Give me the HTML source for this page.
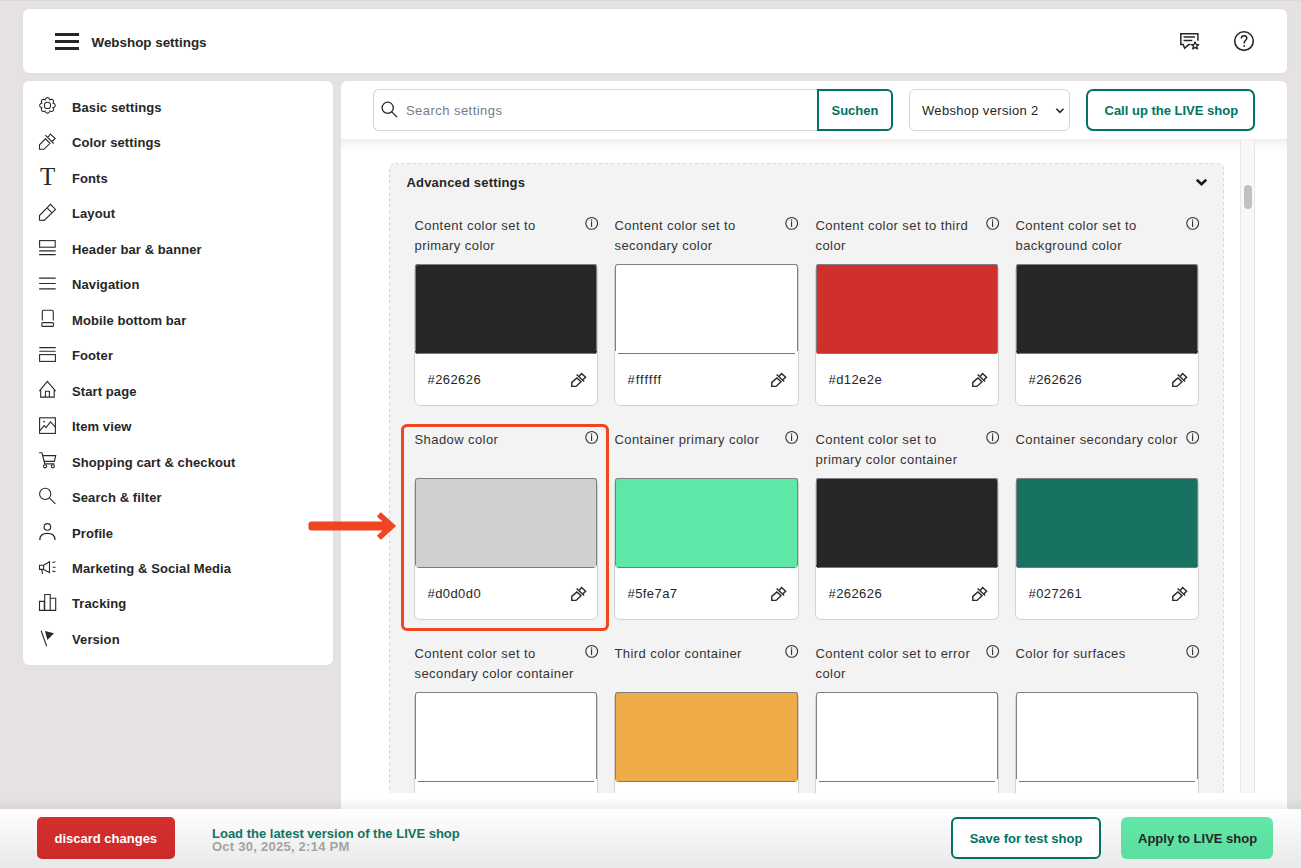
<!DOCTYPE html>
<html><head><meta charset="utf-8"><style>
*{box-sizing:border-box;margin:0;padding:0}
html,body{width:1301px;height:868px;overflow:hidden}
body{background:#e6e2e1;font-family:"Liberation Sans",sans-serif;color:#262626;position:relative}
.abs{position:absolute}
.topline{position:absolute;left:0;top:0;width:1301px;height:1px;background:#d9dadd}
.hdr{position:absolute;left:23px;top:9px;width:1264px;height:64px;background:#fff;border-radius:6px;box-shadow:0 0 4px rgba(0,0,0,0.035)}
.side{position:absolute;left:23px;top:81px;width:310px;height:584px;background:#fff;border-radius:6px;box-shadow:0 0 3px rgba(0,0,0,0.03)}
.main{position:absolute;left:341px;top:81px;width:946px;height:740px;background:#fff;border-radius:6px 6px 0 0}
.t13b{font-size:13px;font-weight:bold;line-height:16px;white-space:nowrap}
.nav{position:absolute;left:72px;font-size:13px;font-weight:bold;line-height:16px;letter-spacing:0.1px;white-space:nowrap;color:#262626}
.search{position:absolute;left:373px;top:89px;width:445px;height:42px;border:1px solid #cdd5dd;border-right:none;border-radius:6px 0 0 6px;background:#fff}
.ph{position:absolute;left:406px;top:102.9px;font-size:13px;line-height:16px;color:#737c87;letter-spacing:0.45px;white-space:nowrap}
.suchen{position:absolute;left:817px;top:89px;width:76px;height:42px;border:2px solid #027261;border-radius:0 6px 6px 0;background:#fff;color:#027261}
.select{position:absolute;left:909px;top:89px;width:161px;height:42px;border:1px solid #cdd5dd;border-radius:6px;background:#fff}
.callup{position:absolute;left:1086px;top:89px;width:169px;height:42px;border:2px solid #027261;border-radius:7px;background:#fff;color:#027261}
.hshadow{position:absolute;left:341px;top:139px;width:946px;height:14px;background:linear-gradient(rgba(0,0,0,0.065),rgba(0,0,0,0.035) 30%,rgba(0,0,0,0.012) 65%,rgba(0,0,0,0))}
.clip{position:absolute;left:341px;top:140px;width:899px;height:653px;overflow:hidden}
.adv{position:absolute;left:48px;top:23px;width:835px;height:900px;background:#f3f3f3;border-radius:6px}
.track{position:absolute;left:1240px;top:140px;width:15px;height:653px;background:#f8f8f8;border-left:1px solid #e6e6e6;border-right:1px solid #e6e6e6}
.thumb{position:absolute;left:1244px;top:185px;width:8px;height:24px;background:#c1c1c1;border-radius:4px}
.lbl{position:absolute;width:170px;font-size:13px;line-height:20px;letter-spacing:0.42px;color:#333;white-space:nowrap}
.card{position:absolute;width:184px;height:142px;background:#fff;border:1px solid #d2d2d2;border-radius:6px}
.sw{position:absolute;left:0px;top:-1px;width:182px;height:90px;border-radius:3px}
.sw::before{content:"";position:absolute;left:0;top:0;right:0;bottom:3px;border:1px solid #808080;border-bottom:none;border-radius:3px 3px 0 0}
.sw::after{content:"";position:absolute;left:3px;right:3px;bottom:0;height:1px;background:#7a7a7a}
.hex{position:absolute;left:12.5px;top:107px;font-size:13px;line-height:16px;letter-spacing:0.42px;color:#262626}
.bshadow{position:absolute;left:0;top:798px;width:1301px;height:11px;background:linear-gradient(rgba(0,0,0,0),rgba(0,0,0,0.06))}
.bbar{position:absolute;left:0;top:809px;width:1301px;height:59px;background:linear-gradient(#ffffff,#e9e9e9)}
.discard{position:absolute;left:37px;top:817px;width:138px;height:42px;background:linear-gradient(#d32f2f,#cc2a2a);border-radius:5px;color:#fff}
.savetest{position:absolute;left:951px;top:817px;width:150px;height:42px;border:2px solid #027261;border-radius:6px;background:#fff;color:#027261}
.apply{position:absolute;left:1121px;top:817px;width:152px;height:42px;background:linear-gradient(#62e8a8,#5bdea0);border-radius:6px;color:#262626}
.redbox{position:absolute;left:401px;top:424px;width:208px;height:207px;border:3px solid #f04522;border-radius:6px}
</style></head><body>
<div class="topline"></div>
<div class="hdr"></div>
<div class="t13b abs" style="left:91.5px;top:34.7px;font-size:13.4px">Webshop settings</div>
<div class="side"></div>
<div class="nav" style="top:99.90px">Basic settings</div><div class="nav" style="top:135.37px">Color settings</div><div class="nav" style="top:170.84px">Fonts</div><div class="nav" style="top:206.31px">Layout</div><div class="nav" style="top:241.78px">Header bar &amp; banner</div><div class="nav" style="top:277.25px">Navigation</div><div class="nav" style="top:312.72px">Mobile bottom bar</div><div class="nav" style="top:348.19px">Footer</div><div class="nav" style="top:383.66px">Start page</div><div class="nav" style="top:419.13px">Item view</div><div class="nav" style="top:454.60px">Shopping cart &amp; checkout</div><div class="nav" style="top:490.07px">Search &amp; filter</div><div class="nav" style="top:525.54px">Profile</div><div class="nav" style="top:561.01px">Marketing &amp; Social Media</div><div class="nav" style="top:596.48px">Tracking</div><div class="nav" style="top:631.95px">Version</div>
<div class="main"></div>
<div class="clip">
<div class="adv"></div>
<svg class="abs" style="left:48px;top:23px" width="835" height="900"><rect x="0.5" y="0.5" width="834" height="899" rx="6" fill="none" stroke="#d4cccc" stroke-width="1" stroke-dasharray="2.2 3.8"/></svg>
<div class="lbl" style="left:73.5px;top:76.0px">Content color set to<br>primary color</div><div class="card" style="left:73px;top:124px;width:184px"><div class="sw" style="background:#262626;width:182px"></div><div class="hex">#262626</div></div><div class="lbl" style="left:273.5px;top:76.0px">Content color set to<br>secondary color</div><div class="card" style="left:273px;top:124px;width:185px"><div class="sw" style="background:#ffffff;width:183px"></div><div class="hex" style="letter-spacing:1px">#ffffff</div></div><div class="lbl" style="left:474.5px;top:76.0px">Content color set to third<br>color</div><div class="card" style="left:474px;top:124px;width:184px"><div class="sw" style="background:#d12e2e;width:182px"></div><div class="hex">#d12e2e</div></div><div class="lbl" style="left:674.5px;top:76.0px">Content color set to<br>background color</div><div class="card" style="left:674px;top:124px;width:184px"><div class="sw" style="background:#262626;width:182px"></div><div class="hex">#262626</div></div><div class="lbl" style="left:73.5px;top:290.0px">Shadow color</div><div class="card" style="left:73px;top:338px;width:184px"><div class="sw" style="background:#d0d0d0;width:182px"></div><div class="hex">#d0d0d0</div></div><div class="lbl" style="left:273.5px;top:290.0px">Container primary color</div><div class="card" style="left:273px;top:338px;width:185px"><div class="sw" style="background:#5fe7a7;width:183px"></div><div class="hex">#5fe7a7</div></div><div class="lbl" style="left:474.5px;top:290.0px">Content color set to<br>primary color container</div><div class="card" style="left:474px;top:338px;width:184px"><div class="sw" style="background:#262626;width:182px"></div><div class="hex">#262626</div></div><div class="lbl" style="left:674.5px;top:290.0px">Container secondary color</div><div class="card" style="left:674px;top:338px;width:184px"><div class="sw" style="background:#187262;width:182px"></div><div class="hex">#027261</div></div><div class="lbl" style="left:73.5px;top:504.0px">Content color set to<br>secondary color container</div><div class="card" style="left:73px;top:552px;width:184px"><div class="sw" style="background:#ffffff;width:182px"></div><div class="hex" style="letter-spacing:1px">#ffffff</div></div><div class="lbl" style="left:273.5px;top:504.0px">Third color container</div><div class="card" style="left:273px;top:552px;width:185px"><div class="sw" style="background:#eeab47;width:183px"></div><div class="hex">#eeab47</div></div><div class="lbl" style="left:474.5px;top:504.0px">Content color set to error<br>color</div><div class="card" style="left:474px;top:552px;width:184px"><div class="sw" style="background:#ffffff;width:182px"></div><div class="hex" style="letter-spacing:1px">#ffffff</div></div><div class="lbl" style="left:674.5px;top:504.0px">Color for surfaces</div><div class="card" style="left:674px;top:552px;width:184px"><div class="sw" style="background:#ffffff;width:182px"></div><div class="hex" style="letter-spacing:1px">#ffffff</div></div>
<svg class="abs" style="left:0;top:0" width="899" height="653"><g transform="translate(250.70 83.35)" stroke="#333" fill="none"><circle cx="0" cy="0" r="5.9" stroke-width="1.1"/><circle cx="-0.15" cy="-3.4" r="0.75" fill="#333" stroke="none"/><path d="M-0.15 -2.1V3.6" stroke-width="1.15"/></g><g transform="translate(225.60 228.00)" stroke="#262626" fill="none" stroke-width="1.4" stroke-linejoin="miter"><path d="M5.2 18.4V14.4L10.3 10L14.4 13.7L9.4 18.4Z"/><path d="M10 6.6L17.5 13.4"/><path d="M12.8 8.2L15 5.5L19 9.3L16.4 11.8"/></g><g transform="translate(450.70 83.35)" stroke="#333" fill="none"><circle cx="0" cy="0" r="5.9" stroke-width="1.1"/><circle cx="-0.15" cy="-3.4" r="0.75" fill="#333" stroke="none"/><path d="M-0.15 -2.1V3.6" stroke-width="1.15"/></g><g transform="translate(425.60 228.00)" stroke="#262626" fill="none" stroke-width="1.4" stroke-linejoin="miter"><path d="M5.2 18.4V14.4L10.3 10L14.4 13.7L9.4 18.4Z"/><path d="M10 6.6L17.5 13.4"/><path d="M12.8 8.2L15 5.5L19 9.3L16.4 11.8"/></g><g transform="translate(651.70 83.35)" stroke="#333" fill="none"><circle cx="0" cy="0" r="5.9" stroke-width="1.1"/><circle cx="-0.15" cy="-3.4" r="0.75" fill="#333" stroke="none"/><path d="M-0.15 -2.1V3.6" stroke-width="1.15"/></g><g transform="translate(626.60 228.00)" stroke="#262626" fill="none" stroke-width="1.4" stroke-linejoin="miter"><path d="M5.2 18.4V14.4L10.3 10L14.4 13.7L9.4 18.4Z"/><path d="M10 6.6L17.5 13.4"/><path d="M12.8 8.2L15 5.5L19 9.3L16.4 11.8"/></g><g transform="translate(851.70 83.35)" stroke="#333" fill="none"><circle cx="0" cy="0" r="5.9" stroke-width="1.1"/><circle cx="-0.15" cy="-3.4" r="0.75" fill="#333" stroke="none"/><path d="M-0.15 -2.1V3.6" stroke-width="1.15"/></g><g transform="translate(826.60 228.00)" stroke="#262626" fill="none" stroke-width="1.4" stroke-linejoin="miter"><path d="M5.2 18.4V14.4L10.3 10L14.4 13.7L9.4 18.4Z"/><path d="M10 6.6L17.5 13.4"/><path d="M12.8 8.2L15 5.5L19 9.3L16.4 11.8"/></g><g transform="translate(250.70 297.35)" stroke="#333" fill="none"><circle cx="0" cy="0" r="5.9" stroke-width="1.1"/><circle cx="-0.15" cy="-3.4" r="0.75" fill="#333" stroke="none"/><path d="M-0.15 -2.1V3.6" stroke-width="1.15"/></g><g transform="translate(225.60 442.00)" stroke="#262626" fill="none" stroke-width="1.4" stroke-linejoin="miter"><path d="M5.2 18.4V14.4L10.3 10L14.4 13.7L9.4 18.4Z"/><path d="M10 6.6L17.5 13.4"/><path d="M12.8 8.2L15 5.5L19 9.3L16.4 11.8"/></g><g transform="translate(450.70 297.35)" stroke="#333" fill="none"><circle cx="0" cy="0" r="5.9" stroke-width="1.1"/><circle cx="-0.15" cy="-3.4" r="0.75" fill="#333" stroke="none"/><path d="M-0.15 -2.1V3.6" stroke-width="1.15"/></g><g transform="translate(425.60 442.00)" stroke="#262626" fill="none" stroke-width="1.4" stroke-linejoin="miter"><path d="M5.2 18.4V14.4L10.3 10L14.4 13.7L9.4 18.4Z"/><path d="M10 6.6L17.5 13.4"/><path d="M12.8 8.2L15 5.5L19 9.3L16.4 11.8"/></g><g transform="translate(651.70 297.35)" stroke="#333" fill="none"><circle cx="0" cy="0" r="5.9" stroke-width="1.1"/><circle cx="-0.15" cy="-3.4" r="0.75" fill="#333" stroke="none"/><path d="M-0.15 -2.1V3.6" stroke-width="1.15"/></g><g transform="translate(626.60 442.00)" stroke="#262626" fill="none" stroke-width="1.4" stroke-linejoin="miter"><path d="M5.2 18.4V14.4L10.3 10L14.4 13.7L9.4 18.4Z"/><path d="M10 6.6L17.5 13.4"/><path d="M12.8 8.2L15 5.5L19 9.3L16.4 11.8"/></g><g transform="translate(851.70 297.35)" stroke="#333" fill="none"><circle cx="0" cy="0" r="5.9" stroke-width="1.1"/><circle cx="-0.15" cy="-3.4" r="0.75" fill="#333" stroke="none"/><path d="M-0.15 -2.1V3.6" stroke-width="1.15"/></g><g transform="translate(826.60 442.00)" stroke="#262626" fill="none" stroke-width="1.4" stroke-linejoin="miter"><path d="M5.2 18.4V14.4L10.3 10L14.4 13.7L9.4 18.4Z"/><path d="M10 6.6L17.5 13.4"/><path d="M12.8 8.2L15 5.5L19 9.3L16.4 11.8"/></g><g transform="translate(250.70 511.35)" stroke="#333" fill="none"><circle cx="0" cy="0" r="5.9" stroke-width="1.1"/><circle cx="-0.15" cy="-3.4" r="0.75" fill="#333" stroke="none"/><path d="M-0.15 -2.1V3.6" stroke-width="1.15"/></g><g transform="translate(225.60 656.00)" stroke="#262626" fill="none" stroke-width="1.4" stroke-linejoin="miter"><path d="M5.2 18.4V14.4L10.3 10L14.4 13.7L9.4 18.4Z"/><path d="M10 6.6L17.5 13.4"/><path d="M12.8 8.2L15 5.5L19 9.3L16.4 11.8"/></g><g transform="translate(450.70 511.35)" stroke="#333" fill="none"><circle cx="0" cy="0" r="5.9" stroke-width="1.1"/><circle cx="-0.15" cy="-3.4" r="0.75" fill="#333" stroke="none"/><path d="M-0.15 -2.1V3.6" stroke-width="1.15"/></g><g transform="translate(425.60 656.00)" stroke="#262626" fill="none" stroke-width="1.4" stroke-linejoin="miter"><path d="M5.2 18.4V14.4L10.3 10L14.4 13.7L9.4 18.4Z"/><path d="M10 6.6L17.5 13.4"/><path d="M12.8 8.2L15 5.5L19 9.3L16.4 11.8"/></g><g transform="translate(651.70 511.35)" stroke="#333" fill="none"><circle cx="0" cy="0" r="5.9" stroke-width="1.1"/><circle cx="-0.15" cy="-3.4" r="0.75" fill="#333" stroke="none"/><path d="M-0.15 -2.1V3.6" stroke-width="1.15"/></g><g transform="translate(626.60 656.00)" stroke="#262626" fill="none" stroke-width="1.4" stroke-linejoin="miter"><path d="M5.2 18.4V14.4L10.3 10L14.4 13.7L9.4 18.4Z"/><path d="M10 6.6L17.5 13.4"/><path d="M12.8 8.2L15 5.5L19 9.3L16.4 11.8"/></g><g transform="translate(851.70 511.35)" stroke="#333" fill="none"><circle cx="0" cy="0" r="5.9" stroke-width="1.1"/><circle cx="-0.15" cy="-3.4" r="0.75" fill="#333" stroke="none"/><path d="M-0.15 -2.1V3.6" stroke-width="1.15"/></g><g transform="translate(826.60 656.00)" stroke="#262626" fill="none" stroke-width="1.4" stroke-linejoin="miter"><path d="M5.2 18.4V14.4L10.3 10L14.4 13.7L9.4 18.4Z"/><path d="M10 6.6L17.5 13.4"/><path d="M12.8 8.2L15 5.5L19 9.3L16.4 11.8"/></g></svg>
</div>
<div class="t13b abs" style="left:406.5px;top:174.5px;letter-spacing:0.18px">Advanced settings</div>
<div class="hshadow"></div>
<div class="search"></div>
<div class="ph">Search settings</div>
<div class="suchen"></div>
<div class="t13b abs" style="left:831.5px;top:102.9px;color:#027261">Suchen</div>
<div class="select"></div>
<div class="abs" style="left:922px;top:102.9px;font-size:13px;line-height:16px;letter-spacing:0.32px;white-space:nowrap;color:#262626">Webshop version 2</div>
<div class="callup"></div>
<div class="t13b abs" style="left:1104.5px;top:102.9px;color:#027261">Call up the LIVE shop</div>
<div class="track"></div>
<div class="thumb"></div>
<div class="bshadow"></div>
<div class="bbar"></div>
<div class="discard"></div>
<div class="t13b abs" style="left:54.5px;top:830.7px;color:#fff">discard changes</div>
<div class="t13b abs" style="left:212px;top:826.1px;color:#12735f">Load the latest version of the LIVE shop</div>
<div class="t13b abs" style="left:212px;top:839px;color:#a3a3a3;letter-spacing:0.25px">Oct 30, 2025, 2:14 PM</div>
<div class="savetest"></div>
<div class="t13b abs" style="left:969.7px;top:830.5px;color:#027261">Save for test shop</div>
<div class="apply"></div>
<div class="t13b abs" style="left:1138px;top:830.5px;color:#262626">Apply to LIVE shop</div>
<div class="redbox"></div>
<svg class="abs" style="left:0;top:0" width="1301" height="868" viewBox="0 0 1301 868">
 <rect x="55" y="33" width="24" height="3" fill="#262626"/>
 <rect x="55" y="40" width="24" height="3" fill="#262626"/>
 <rect x="55" y="47" width="24" height="3" fill="#262626"/>
 <g fill="none" stroke="#262626" stroke-width="1.5">
  <path d="M1197.9 40.8V33.8H1180.8V44.6H1183.2L1184.6 48.3L1188.6 44.6H1190.5"/>
  <path d="M1183.5 37.1H1195M1183.5 40.4H1192.3"/>
 </g>
 <path d="M1195.1 41.9L1196.2 44.5L1198.8 44.6L1196.8 46.3L1197.5 48.9L1195.1 47.4L1192.7 48.9L1193.4 46.3L1191.4 44.6L1194 44.5Z" fill="none" stroke="#262626" stroke-width="1.3" stroke-linejoin="round"/>
 <circle cx="1244" cy="41.1" r="9.3" fill="none" stroke="#262626" stroke-width="1.6"/>
 <path d="M1241.3 38.4C1241.3 36.6 1242.5 35.8 1244.1 35.8C1245.7 35.8 1246.8 36.8 1246.8 38.2C1246.8 40.1 1244.3 40.5 1244.3 42.6V43.4" fill="none" stroke="#262626" stroke-width="1.5"/>
 <rect x="1243.4" y="45.2" width="1.7" height="1.6" fill="#262626"/>
 <g fill="none" stroke="#2a2a2a" stroke-width="1.1">
  <path d="M47.45 97.65 L47.65 97.66 L47.85 97.69 L48.05 97.75 L48.25 97.82 L48.43 97.92 L48.62 98.04 L48.79 98.17 L48.95 98.32 L49.11 98.49 L49.25 98.68 L49.38 98.87 L49.50 99.08 L49.61 99.31 L49.70 99.54 L49.77 99.81 L50.00 99.67 L50.23 99.57 L50.46 99.48 L50.70 99.42 L50.93 99.37 L51.16 99.34 L51.39 99.33 L51.61 99.34 L51.83 99.37 L52.04 99.42 L52.24 99.48 L52.43 99.56 L52.61 99.67 L52.78 99.78 L52.93 99.92 L53.07 100.07 L53.18 100.24 L53.29 100.42 L53.37 100.61 L53.43 100.81 L53.48 101.02 L53.51 101.24 L53.52 101.46 L53.51 101.69 L53.48 101.92 L53.43 102.15 L53.37 102.39 L53.28 102.62 L53.18 102.85 L53.04 103.08 L53.31 103.15 L53.54 103.24 L53.77 103.35 L53.98 103.47 L54.17 103.60 L54.36 103.74 L54.53 103.90 L54.68 104.06 L54.81 104.23 L54.93 104.42 L55.03 104.60 L55.10 104.80 L55.16 105.00 L55.19 105.20 L55.20 105.40 L55.19 105.60 L55.16 105.80 L55.10 106.00 L55.03 106.20 L54.93 106.38 L54.81 106.57 L54.68 106.74 L54.53 106.90 L54.36 107.06 L54.17 107.20 L53.98 107.33 L53.77 107.45 L53.54 107.56 L53.31 107.65 L53.04 107.72 L53.18 107.95 L53.28 108.18 L53.37 108.41 L53.43 108.65 L53.48 108.88 L53.51 109.11 L53.52 109.34 L53.51 109.56 L53.48 109.78 L53.43 109.99 L53.37 110.19 L53.29 110.38 L53.18 110.56 L53.07 110.73 L52.93 110.88 L52.78 111.02 L52.61 111.13 L52.43 111.24 L52.24 111.32 L52.04 111.38 L51.83 111.43 L51.61 111.46 L51.39 111.47 L51.16 111.46 L50.93 111.43 L50.70 111.38 L50.46 111.32 L50.23 111.23 L50.00 111.13 L49.77 110.99 L49.70 111.26 L49.61 111.49 L49.50 111.72 L49.38 111.93 L49.25 112.12 L49.11 112.31 L48.95 112.48 L48.79 112.63 L48.62 112.76 L48.43 112.88 L48.25 112.98 L48.05 113.05 L47.85 113.11 L47.65 113.14 L47.45 113.15 L47.25 113.14 L47.05 113.11 L46.85 113.05 L46.65 112.98 L46.47 112.88 L46.28 112.76 L46.11 112.63 L45.95 112.48 L45.79 112.31 L45.65 112.12 L45.52 111.93 L45.40 111.72 L45.29 111.49 L45.20 111.26 L45.13 110.99 L44.90 111.13 L44.67 111.23 L44.44 111.32 L44.20 111.38 L43.97 111.43 L43.74 111.46 L43.51 111.47 L43.29 111.46 L43.07 111.43 L42.86 111.38 L42.66 111.32 L42.47 111.24 L42.29 111.13 L42.12 111.02 L41.97 110.88 L41.83 110.73 L41.72 110.56 L41.61 110.38 L41.53 110.19 L41.47 109.99 L41.42 109.78 L41.39 109.56 L41.38 109.34 L41.39 109.11 L41.42 108.88 L41.47 108.65 L41.53 108.41 L41.62 108.18 L41.72 107.95 L41.86 107.72 L41.59 107.65 L41.36 107.56 L41.13 107.45 L40.92 107.33 L40.73 107.20 L40.54 107.06 L40.37 106.90 L40.22 106.74 L40.09 106.57 L39.97 106.38 L39.87 106.20 L39.80 106.00 L39.74 105.80 L39.71 105.60 L39.70 105.40 L39.71 105.20 L39.74 105.00 L39.80 104.80 L39.87 104.60 L39.97 104.42 L40.09 104.23 L40.22 104.06 L40.37 103.90 L40.54 103.74 L40.73 103.60 L40.92 103.47 L41.13 103.35 L41.36 103.24 L41.59 103.15 L41.86 103.08 L41.72 102.85 L41.62 102.62 L41.53 102.39 L41.47 102.15 L41.42 101.92 L41.39 101.69 L41.38 101.46 L41.39 101.24 L41.42 101.02 L41.47 100.81 L41.53 100.61 L41.61 100.42 L41.72 100.24 L41.83 100.07 L41.97 99.92 L42.12 99.78 L42.29 99.67 L42.47 99.56 L42.66 99.48 L42.86 99.42 L43.07 99.37 L43.29 99.34 L43.51 99.33 L43.74 99.34 L43.97 99.37 L44.20 99.42 L44.44 99.48 L44.67 99.57 L44.90 99.67 L45.13 99.81 L45.20 99.54 L45.29 99.31 L45.40 99.08 L45.52 98.87 L45.65 98.68 L45.79 98.49 L45.95 98.32 L46.11 98.17 L46.28 98.04 L46.47 97.92 L46.65 97.82 L46.85 97.75 L47.05 97.69 L47.25 97.66Z"/>
  <circle cx="47.45" cy="105.4" r="3.1"/>
  <path d="M39.5 149.3V144.8L45.5 138.8L50 143.3L44 149.3Z M45.3 135.2L53.7 143.5 M47.7 137.6L50.5 134L55.2 138.5L52 141.5"/>
  <path d="M39.5 220.3V215.5L50.5 204.3L55.5 209.4L44.2 220.4Z M47.5 208.3L51.6 212.3"/>
  <rect x="39.6" y="240.6" width="15.6" height="6.6"/>
  <path d="M39.1 250.9H55.7M39.1 254.6H55.7"/>
  <path d="M39.1 278.2H55.7M39.1 283.5H55.7M39.1 288.9H55.7" stroke-width="1.2"/>
  <path d="M42.3 320.5V311.5Q42.3 310.2 43.6 310.2H52Q53.3 310.2 53.3 311.5V320.5"/>
  <rect x="41.8" y="322.6" width="11.7" height="3.8" rx="1"/>
  <path d="M39.3 347.6H55.7M39.3 351.3H55.7"/>
  <rect x="39.6" y="354.6" width="15.8" height="6.8"/>
  <path d="M39.3 391.2L47.4 381.3L55.6 391.2 M40.7 389.5V397.1H54.2V389.5 M45.4 397.1V391.3H49.4V397.1"/>
  <rect x="39.6" y="417.8" width="15.8" height="15.6"/><circle cx="44" cy="421.6" r="0.9" fill="#2a2a2a" stroke="none"/>
  <path d="M39.6 430.9L44.3 425.6L46 427.6L50.5 421.8L55.4 427.2"/>
  <path d="M39.1 452.8H41.9L42.6 455.6H55.7L54.4 461.4H44.3L42.6 455.6L44.7 463.9H54.4"/>
  <circle cx="45" cy="466.3" r="1.6"/><circle cx="52.8" cy="466.3" r="1.6"/>
  <circle cx="45.2" cy="493.9" r="5.6"/>
  <path d="M49.3 497.9L55.4 503.9"/>
  <circle cx="47.4" cy="526.9" r="3.3"/>
  <path d="M39.8 539.9C39.8 535.5 43 533.4 47.4 533.4C51.8 533.4 55 535.5 55 539.9" stroke-width="1.3"/>
  <path d="M39.5 565.3H43.6V569.4H39.5Z M43.6 565.3L49.5 561.8V572.5L43.6 569.4 M41.6 569.4L42.6 573.9 M52.3 562.5L55.4 561.8 M52.6 567.3H55.7 M52.3 571.1L55.4 571.8"/>
  <path d="M39.5 601.4H44.3V610.4H39.5Z M44.7 594.5H50.2V610.4H44.7Z M50.2 598.3H55.7V610.4H50.2Z"/>
  <path d="M41.1 630.8L46.7 646.3"/>
 </g>
 <path d="M45 631.1L54 633.2L47.4 640.1Z" fill="#2a2a2a"/>
 <text x="40" y="185" font-family="Liberation Serif" font-size="25" fill="#262626">T</text>
 <g fill="none" stroke="#262626" stroke-width="1.3">
  <circle cx="387.7" cy="107.8" r="5.6"/>
  <path d="M391.8 111.9L396.9 117"/>
 </g>
 <path d="M1196.8 179.8L1201.5 184.2L1206.2 179.8" fill="none" stroke="#1a1a1a" stroke-width="2.6"/>
 <path d="M1056.4 108.7L1059.9 112.3L1063.5 108.7" fill="none" stroke="#262626" stroke-width="1.6"/>
 <path d="M311.5 522H384L377.6 516.3L380.8 513L395.3 526L380.8 539L377.6 535.7L384 530H311.5Q309 530 309 527.5V524.5Q309 522 311.5 522Z" fill="#f04522" stroke="#f04522" stroke-width="1.1" stroke-linejoin="round"/>
</svg>
</body></html>
